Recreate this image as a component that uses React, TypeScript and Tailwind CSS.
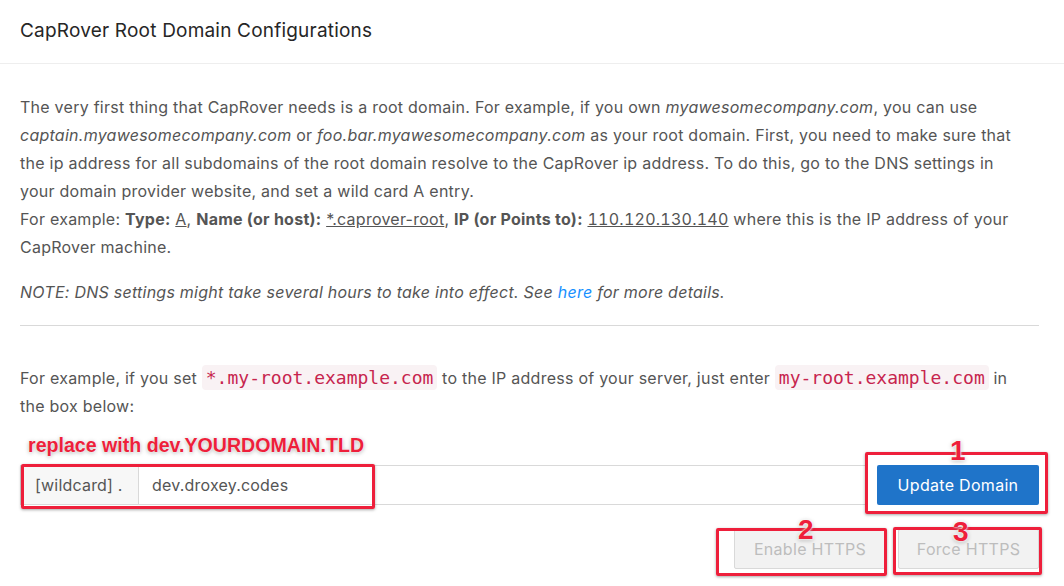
import React from 'react';

const RED = '#ee1f3b';

const Code: React.FC<{ children: React.ReactNode }> = ({ children }) => (
  <code className="rounded-[4px] bg-[#f9f2f4] px-[4px] py-[2px] font-['DejaVu_Sans_Mono',monospace] text-[18px] tracking-normal text-[#c7254e]">
    {children}
  </code>
);

const RedBox: React.FC<{ className: string }> = ({ className }) => (
  <div
    className={`pointer-events-none absolute rounded-[2px] border-[3px] border-[#ee1f3b] shadow-[0_1px_3px_rgba(0,0,0,0.35)] ${className}`}
  />
);

const Num: React.FC<{ n: string; className: string }> = ({ n, className }) => (
  <span
    className={`absolute font-['Liberation_Sans',Arial,sans-serif] text-[28px] leading-none font-bold text-[#ee1f3b] [text-shadow:0_0_2px_#fff,0_0_3px_#fff,0_1px_4px_rgba(0,0,0,0.35)] ${className}`}
  >
    {n}
  </span>
);

export default function App() {
  return (
    <div className="relative h-[586px] w-[1064px] overflow-hidden bg-white font-['Inter','Noto_Sans',sans-serif]">
      <div className="flex h-16 items-center border-b border-[#eeeeee] px-5 text-[19px] tracking-[0.2px] text-[#262626]">
        CapRover Root Domain Configurations
      </div>

      <div className="pl-5 pr-[25px] pt-[29px] text-[16px] leading-[28px] tracking-[0.25px] text-[#555555]">
        <p className="mb-[17px]">
          The very first thing that CapRover needs is a root domain. For example, if you own{' '}
          <i>myawesomecompany.com</i>, you can use
          <br />
          <i>captain.myawesomecompany.com</i> or <i>foo.bar.myawesomecompany.com</i> as your root domain.
          First, you need to make sure that
          <br />
          the ip address for all subdomains of the root domain resolve to the CapRover ip address. To do this,
          go to the DNS settings in
          <br />
          your domain provider website, and set a wild card A entry.
          <br />
          For example: <b>Type:</b> <u>A</u>, <b>Name (or host):</b> <u>*.caprover-root</u>,{' '}
          <b>IP (or Points to):</b> <u className="tabular-nums">110.120.130.140</u> where this is the IP
          address of your
          <br />
          CapRover machine.
        </p>
        <p className="italic">
          NOTE: DNS settings might take several hours to take into effect. See{' '}
          <a className="text-[#1890ff]">here</a> for more details.
        </p>

        <hr className="mt-[19px] border-t border-[#d9d9d9]" />

        <p className="mt-[38px]">
          For example, if you set <Code>*.my-root.example.com</Code> to the IP address of your server, just
          enter <Code>my-root.example.com</Code> in
          <br />
          the box below:
        </p>

        <div className="mt-[45px] flex items-center tracking-normal">
          <div className="flex h-10 flex-1 border border-[#d9d9d9]">
            <span className="flex w-[118px] items-center border-r border-[#d9d9d9] bg-[#f7f7f7] pl-[14px] tracking-[0.2px] text-[#555555]">
              [wildcard] .
            </span>
            <span className="flex flex-1 items-center pl-[13px] tracking-[0.2px] text-[#555555]">
              dev.droxey.codes
            </span>
          </div>
          <button className="ml-[10px] h-10 w-[162px] rounded-[2px] bg-[#1f74c9] text-[16px] tracking-[0.3px] text-white">
            Update Domain
          </button>
        </div>

        <div className="mt-6 flex justify-end gap-3 tracking-[0.3px]">
          <button className="h-10 w-[152px] rounded-[2px] border border-[#d9d9d9] bg-[#f2f2f2] text-[16px] text-[#bdbdbd]">
            Enable HTTPS
          </button>
          <button className="h-10 w-[141px] rounded-[2px] border border-[#d9d9d9] bg-[#f2f2f2] text-[16px] text-[#bdbdbd]">
            Force HTTPS
          </button>
        </div>
      </div>

      <span
        className="absolute left-[28px] top-[433px] font-['Liberation_Sans',Arial,sans-serif] text-[19.6px] font-bold leading-[24px] [text-shadow:0_0_2px_#fff,0_1px_4px_rgba(0,0,0,0.35)]"
        style={{ color: RED }}
      >
        replace with dev.YOURDOMAIN.TLD
      </span>

      <RedBox className="left-[21px] top-[464px] h-[45px] w-[354px]" />
      <RedBox className="left-[865px] top-[452px] h-[62px] w-[183px]" />
      <RedBox className="left-[716px] top-[528px] h-[48px] w-[171px]" />
      <RedBox className="left-[893px] top-[527px] h-[48px] w-[149px]" />

      <Num n="1" className="left-[950px] top-[437px]" />
      <Num n="2" className="left-[798px] top-[516px]" />
      <Num n="3" className="left-[953px] top-[518px]" />
    </div>
  );
}
